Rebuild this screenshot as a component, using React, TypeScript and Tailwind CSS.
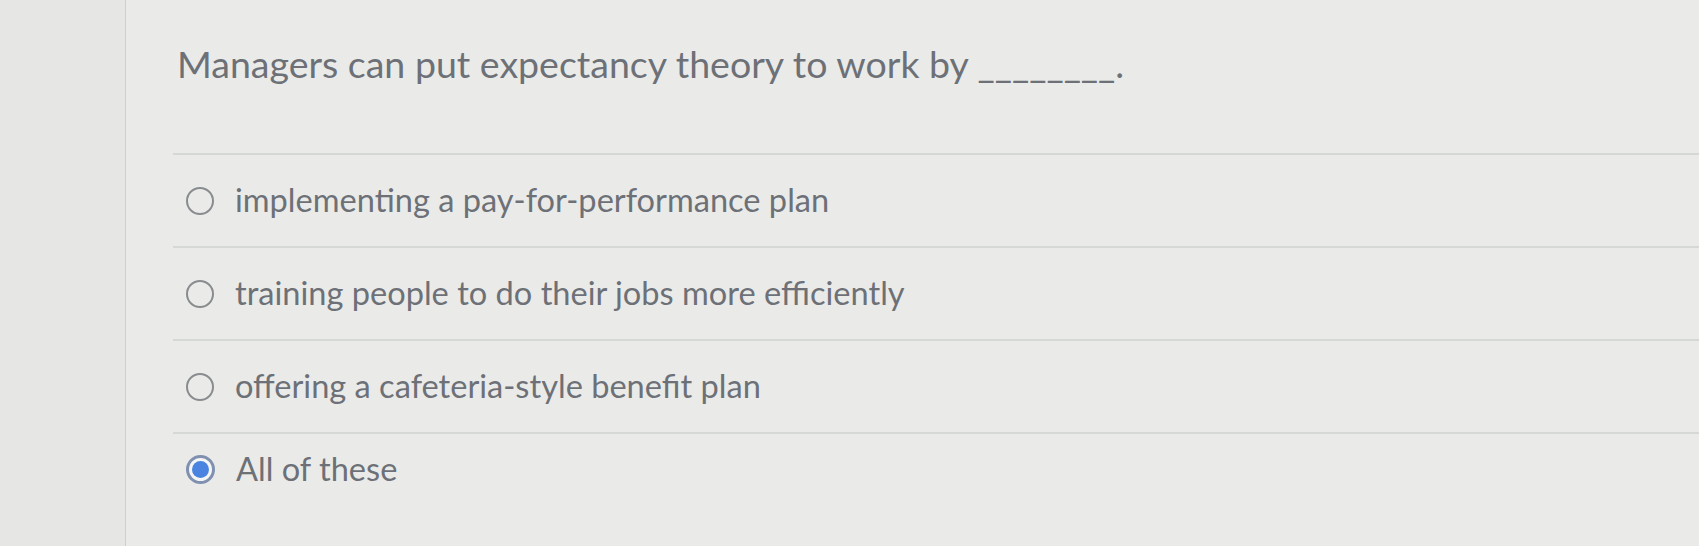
import React from 'react';

const options = [
    { label: 'implementing a pay-for-performance plan', checked: false },
    { label: 'training people to do their jobs more efficiently', checked: false },
    { label: 'offering a cafeteria-style benefit plan', checked: false },
    { label: 'All of these', checked: true },
];

// Radio circle, empty or selected
const Radio: React.FC<{ checked: boolean }> = ({ checked }) =>
    checked ? (
        <div className="w-[29px] h-[29px] rounded-full border-[3px] border-[#7f90b0] bg-[#f4f5f4] flex items-center justify-center shrink-0">
            <div className="w-[17px] h-[17px] rounded-full bg-[#4a84e0]" />
        </div>
    ) : (
        <div className="w-[28px] h-[28px] rounded-full border-[2.5px] border-[#898c8f] shrink-0" />
    );

export default function App() {
    return (
        <div
            className="flex w-full h-[546px] overflow-hidden bg-[#eaebe9] text-[#6d7177]"
            style={{ fontFamily: 'Lato, "Noto Sans", sans-serif' }}
        >
            {/* left gutter */}
            <div className="w-[126px] shrink-0 bg-[#e6e7e5] border-r border-[#cfd0ce]" />

            <div className="flex-1 flex flex-col pl-[47px]">
                <div className="h-[153px] pt-[42px] pl-[4px] text-[37.5px] leading-[44px]">
                    Managers can put expectancy theory to work by ________.
                </div>

                {options.map((o, i) => (
                    <div
                        key={i}
                        className={`border-t-2 border-[#d6d8d6] flex items-center pl-[13px] gap-[21px] ${i === options.length - 1 ? 'h-[72px]' : 'h-[93px]'}`}
                    >
                        <Radio checked={o.checked} />
                        <span className="text-[32.6px] leading-none">{o.label}</span>
                    </div>
                ))}
            </div>
        </div>
    );
}
